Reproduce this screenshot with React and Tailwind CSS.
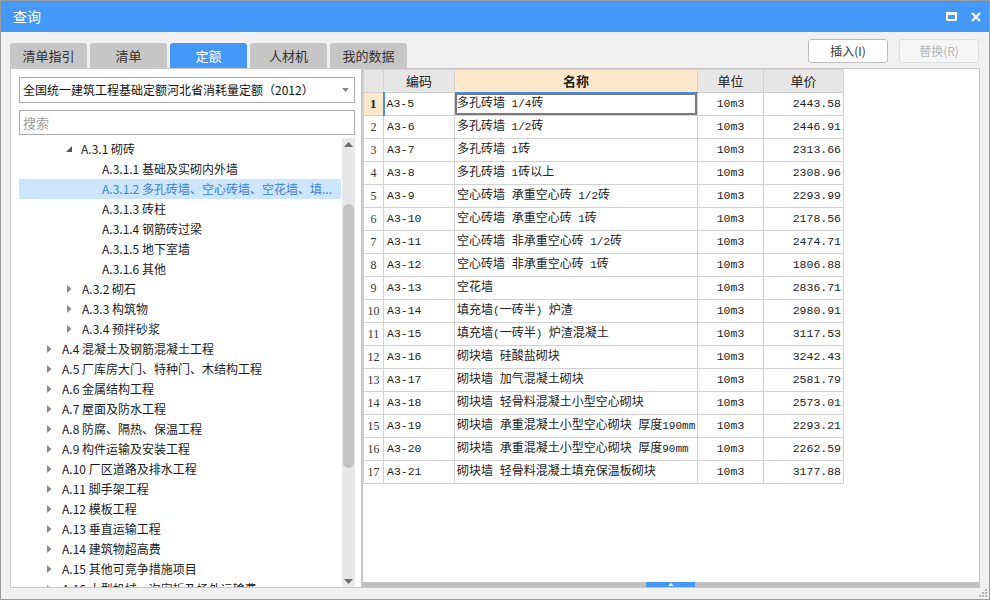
import React from "react";

const tabs = ["清单指引", "清单", "定额", "人材机", "我的数据"];

const tree = [
  { level: 1, label: "A.3.1 砌砖", arrow: "open" },
  { level: 2, label: "A.3.1.1 基础及实砌内外墙" },
  { level: 2, label: "A.3.1.2 多孔砖墙、空心砖墙、空花墙、填...", selected: true },
  { level: 2, label: "A.3.1.3 砖柱" },
  { level: 2, label: "A.3.1.4 钢筋砖过梁" },
  { level: 2, label: "A.3.1.5 地下室墙" },
  { level: 2, label: "A.3.1.6 其他" },
  { level: 1, label: "A.3.2 砌石", arrow: "closed" },
  { level: 1, label: "A.3.3 构筑物", arrow: "closed" },
  { level: 1, label: "A.3.4 预拌砂浆", arrow: "closed" },
  { level: 0, label: "A.4 混凝土及钢筋混凝土工程", arrow: "closed" },
  { level: 0, label: "A.5 厂库房大门、特种门、木结构工程", arrow: "closed" },
  { level: 0, label: "A.6 金属结构工程", arrow: "closed" },
  { level: 0, label: "A.7 屋面及防水工程", arrow: "closed" },
  { level: 0, label: "A.8 防腐、隔热、保温工程", arrow: "closed" },
  { level: 0, label: "A.9 构件运输及安装工程", arrow: "closed" },
  { level: 0, label: "A.10 厂区道路及排水工程", arrow: "closed" },
  { level: 0, label: "A.11 脚手架工程", arrow: "closed" },
  { level: 0, label: "A.12 模板工程", arrow: "closed" },
  { level: 0, label: "A.13 垂直运输工程", arrow: "closed" },
  { level: 0, label: "A.14 建筑物超高费", arrow: "closed" },
  { level: 0, label: "A.15 其他可竞争措施项目", arrow: "closed" },
  { level: 0, label: "A.16 大型机械一次安拆及场外运输费", arrow: "closed" },
];

const levelPad = { 0: "pl-[27px]", 1: "pl-[47px]", 2: "pl-[67px]" };

const rows = [
  ["A3-5", "多孔砖墙 1/4砖", "10m3", "2443.58"],
  ["A3-6", "多孔砖墙 1/2砖", "10m3", "2446.91"],
  ["A3-7", "多孔砖墙 1砖", "10m3", "2313.66"],
  ["A3-8", "多孔砖墙 1砖以上", "10m3", "2308.96"],
  ["A3-9", "空心砖墙 承重空心砖 1/2砖", "10m3", "2293.99"],
  ["A3-10", "空心砖墙 承重空心砖 1砖", "10m3", "2178.56"],
  ["A3-11", "空心砖墙 非承重空心砖 1/2砖", "10m3", "2474.71"],
  ["A3-12", "空心砖墙 非承重空心砖 1砖", "10m3", "1806.88"],
  ["A3-13", "空花墙", "10m3", "2836.71"],
  ["A3-14", "填充墙(一砖半) 炉渣", "10m3", "2980.91"],
  ["A3-15", "填充墙(一砖半) 炉渣混凝土", "10m3", "3117.53"],
  ["A3-16", "砌块墙 硅酸盐砌块", "10m3", "3242.43"],
  ["A3-17", "砌块墙 加气混凝土砌块", "10m3", "2581.79"],
  ["A3-18", "砌块墙 轻骨料混凝土小型空心砌块", "10m3", "2573.01"],
  ["A3-19", "砌块墙 承重混凝土小型空心砌块 厚度190mm", "10m3", "2293.21"],
  ["A3-20", "砌块墙 承重混凝土小型空心砌块 厚度90mm", "10m3", "2262.59"],
  ["A3-21", "砌块墙 轻骨料混凝土填充保温板砌块", "10m3", "3177.88"],
];

const ui = { fontFamily: '"Noto Sans CJK SC", "Noto Sans", sans-serif' };
const cellFont = { fontFamily: '"Liberation Mono", "Noto Sans CJK SC", monospace' };

// ascii bits a little smaller so they sit at half the width of a CJK glyph
function Mixed({ text }) {
  return text.split(/([\x00-\x7f]+)/).map((s, i) =>
    /^[\x00-\x7f]+$/.test(s) ? (
      <span key={i} className="text-[11px]">{s}</span>
    ) : (
      <span key={i}>{s}</span>
    )
  );
}

function Arrow({ type }) {
  if (type === "open") {
    return (
      <svg width="7" height="7" viewBox="0 0 7 7" className="mr-[8px] mt-[1px]">
        <polygon points="6,0 6,6 0,6" fill="#595959" />
      </svg>
    );
  }
  if (type === "closed") {
    return (
      <svg width="5" height="8" viewBox="0 0 5 8" className="mr-[10px] ml-[1px]">
        <polygon points="0,0 4.5,4 0,8" fill="#8a8a8a" />
      </svg>
    );
  }
  return null;
}

export default function App() {
  return (
    <div
      className="w-[990px] h-[600px] flex flex-col bg-[#f0f0f0] border border-[#9a9a9a] overflow-hidden text-[#222]"
      style={ui}
    >
      {/* title bar */}
      <div className="h-[31px] shrink-0 bg-[#4499f8] flex items-center pl-[12px] pr-[8px]">
        <span className="text-white text-[14px]">查询</span>
        <div className="ml-auto flex items-center gap-[14px]">
          <div className="w-[11px] h-[9px] border-2 border-white border-t-[3px]" />
          <svg width="10" height="10" viewBox="0 0 10 10">
            <path d="M1 1 L9 9 M9 1 L1 9" stroke="white" strokeWidth="2.2" />
          </svg>
        </div>
      </div>

      {/* toolbar */}
      <div className="flex items-start px-[9px] pt-[6px] shrink-0 h-[36px]">
        <div className="flex gap-[3px] mt-[5px]">
          {tabs.map((t) => (
            <div
              key={t}
              className={
                t === "定额"
                  ? "w-[77px] h-[25px] rounded-t-[3px] bg-[#4499f8] text-white text-[13px] flex items-center justify-center"
                  : "w-[77px] h-[25px] rounded-t-[3px] bg-[#c6c6c6] text-[#333] text-[13px] flex items-center justify-center"
              }
            >
              {t}
            </div>
          ))}
        </div>
        <div className="ml-auto flex gap-[11px] mt-[1px] mr-[1px]">
          <button className="w-[80px] h-[24px] bg-white border border-[#bdbdbd] rounded-[3px] text-[12px] text-[#333]">
            插入(I)
          </button>
          <button className="w-[80px] h-[24px] bg-[#f6f6f6] border border-[#dedede] rounded-[3px] text-[12px] text-[#b5b5b5]">
            替换(R)
          </button>
        </div>
      </div>

      {/* content */}
      <div className="flex px-[9px] h-[520px] shrink-0">
        {/* left panel */}
        <div className="w-[352px] bg-white border border-[#c8c8c8] flex flex-col pl-[8px] pr-[6px] pt-[8px]">
          <div className="h-[26px] border border-[#a9a9a9] flex items-center pl-[3px] pr-[5px] text-[12px] text-[#111]">
            <span>全国统一建筑工程基础定额河北省消耗量定额（2012）</span>
            <svg width="7" height="4" viewBox="0 0 7 4" className="ml-auto">
              <polygon points="0,0 7,0 3.5,4" fill="#8a8a8a" />
            </svg>
          </div>
          <div className="h-[25px] mt-[7px] border border-[#a9a9a9] flex items-center pl-[3px] text-[13px] text-[#a0a0a0]">
            搜索
          </div>
          <div className="flex flex-1 mt-[3px] min-h-0">
            <div className="flex-1 overflow-hidden pt-[1px] mr-[1px]">
              {tree.map((n) => (
                <div
                  key={n.label}
                  className={
                    "h-[20px] flex items-center text-[12px] whitespace-nowrap " +
                    levelPad[n.level] +
                    (n.selected ? " bg-[#cce6fd] text-[#3d7fd9]" : " text-[#1a1a1a]")
                  }
                >
                  {n.arrow ? <Arrow type={n.arrow} /> : null}
                  <span className={n.level === 2 ? "ml-[16px]" : ""}>{n.label}</span>
                </div>
              ))}
            </div>
            <div className="w-[13px] bg-[#e8e8e8] flex flex-col items-center">
              <svg width="9" height="5" viewBox="0 0 9 5" className="mt-[4px]">
                <polygon points="0,5 9,5 4.5,0" fill="#6f6f6f" />
              </svg>
              <div className="w-[11px] h-[264px] mt-[57px] bg-[#c3c3c3] rounded-full" />
              <svg width="9" height="5" viewBox="0 0 9 5" className="mt-auto mb-[3px]">
                <polygon points="0,0 9,0 4.5,5" fill="#6f6f6f" />
              </svg>
            </div>
          </div>
        </div>

        {/* right panel */}
        <div className="flex-1 bg-white border border-[#c8c8c8] flex flex-col">
          <div className="flex-1">
            <table className="w-[480px] border-collapse text-[11.5px] table-fixed" style={cellFont}>
              <colgroup>
                <col className="w-[20px]" />
                <col className="w-[71px]" />
                <col className="w-[243px]" />
                <col className="w-[66px]" />
                <col className="w-[80px]" />
              </colgroup>
              <thead>
                <tr className="h-[23px]" style={ui}>
                  <th className="bg-[#e6e6e6] border border-[#d2d2d2] font-normal"></th>
                  <th className="bg-[#e6e6e6] border border-[#d2d2d2] font-normal text-[13px]">编码</th>
                  <th className="bg-[#fde8cc] border border-[#d2d2d2] border-b-[#3d8ff0] font-bold text-[13px]">名称</th>
                  <th className="bg-[#e6e6e6] border border-[#d2d2d2] font-normal text-[13px]">单位</th>
                  <th className="bg-[#e6e6e6] border border-[#d2d2d2] font-normal text-[13px]">单价</th>
                </tr>
              </thead>
              <tbody>
                {rows.map((r, i) => (
                  <tr key={r[0]} className="h-[23px]">
                    <td
                      className={
                        i === 0
                          ? "bg-[#fde8cc] border border-[#d2d2d2] text-center font-bold text-[13px]"
                          : "border border-[#d2d2d2] text-center text-[12px] text-[#333]"
                      }
                      style={{ fontFamily: '"Liberation Serif", serif' }}
                    >
                      {i + 1}
                    </td>
                    <td
                      className={
                        i === 0
                          ? "border border-[#d2d2d2] border-l-2 border-l-[#3d8ff0] pl-[2px] whitespace-nowrap"
                          : "border border-[#d2d2d2] pl-[3px] whitespace-nowrap"
                      }
                    >
                      {r[0]}
                    </td>
                    <td
                      className={
                        i === 0
                          ? "border border-[#d2d2d2] pl-[2px] whitespace-nowrap overflow-hidden shadow-[inset_0_0_0_2px_#7a7a7a] text-[12px]"
                          : "border border-[#d2d2d2] pl-[2px] whitespace-nowrap overflow-hidden text-[12px]"
                      }
                    >
                      <Mixed text={r[1]} />
                    </td>
                    <td className="border border-[#d2d2d2] text-center">{r[2]}</td>
                    <td className="border border-[#d2d2d2] text-right pr-[2px]">{r[3]}</td>
                  </tr>
                ))}
              </tbody>
            </table>
          </div>
          <div className="h-[5px] bg-[#c0c0c0] flex">
            <div className="w-[283px]" />
            <div className="w-[49px] bg-[#4499f8] flex justify-center items-center">
              <svg width="6" height="3" viewBox="0 0 6 3">
                <polygon points="0,3 6,3 3,0" fill="white" />
              </svg>
            </div>
          </div>
        </div>
      </div>

      <div className="flex-1 flex justify-end items-end pr-[2px] pb-[2px]">
        <svg width="8" height="8" viewBox="0 0 8 8">
          <rect x="6" y="0" width="2" height="2" fill="#b0b0b0" />
          <rect x="3" y="3" width="2" height="2" fill="#b0b0b0" />
          <rect x="6" y="3" width="2" height="2" fill="#b0b0b0" />
          <rect x="0" y="6" width="2" height="2" fill="#b0b0b0" />
          <rect x="3" y="6" width="2" height="2" fill="#b0b0b0" />
          <rect x="6" y="6" width="2" height="2" fill="#b0b0b0" />
        </svg>
      </div>
    </div>
  );
}
